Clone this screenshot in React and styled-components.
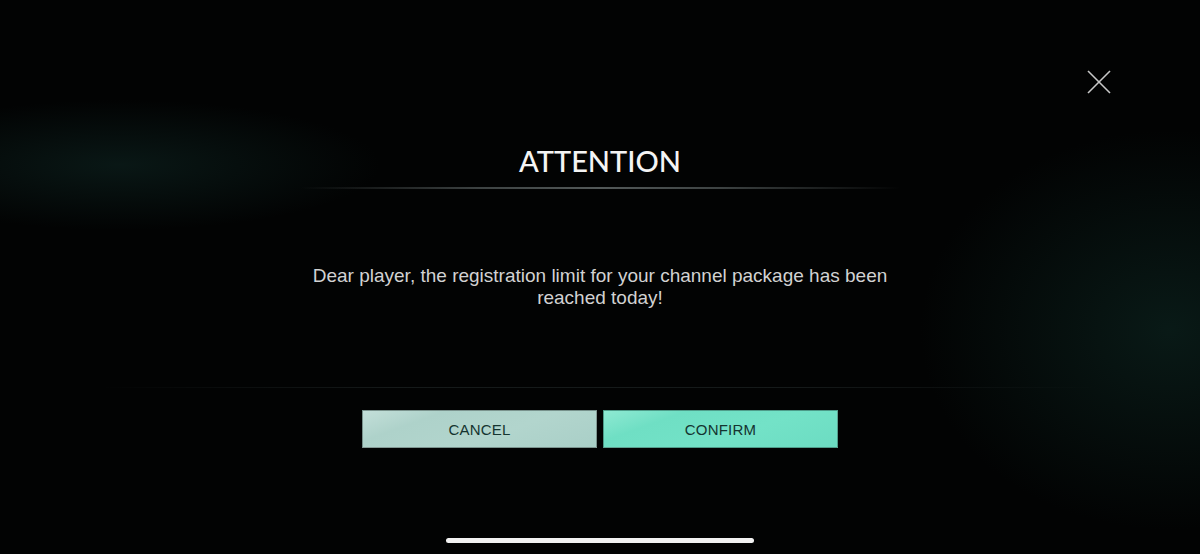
import React from "react";
import styled, { createGlobalStyle } from "styled-components";

const Global = createGlobalStyle`
  html, body { margin: 0; padding: 0; background: #000; }
  body { width: 1200px; height: 554px; overflow: hidden; font-family: "Liberation Sans", Arial, sans-serif; }
`;

const Screen = styled.div`
  position: relative;
  width: 1200px;
  height: 554px;
  background:
    radial-gradient(ellipse 260px 65px at 120px 165px, rgba(18, 48, 44, 0.45), transparent 100%),
    radial-gradient(ellipse 250px 200px at 1170px 330px, rgba(16, 48, 42, 0.5), transparent 100%),
    #020303;
  display: flex;
  flex-direction: column;
  align-items: center;
  overflow: hidden;
`;

const CloseButton = styled.button`
  position: absolute;
  top: 68px;
  left: 1085px;
  width: 28px;
  height: 28px;
  padding: 0;
  border: none;
  background: transparent;
  cursor: pointer;
`;

const Title = styled.h1`
  margin: 144px 0 0;
  font-family: "Lato", "Open Sans", sans-serif;
  font-weight: 500;
  font-size: 29px;
  letter-spacing: 0;
  color: #f4f4f4;
  line-height: 34px;
`;

const Divider = styled.div`
  margin-top: 9px;
  width: 600px;
  height: 2px;
  background: linear-gradient(90deg, transparent, rgba(120, 130, 130, 0.5) 30%, rgba(150, 160, 160, 0.55) 50%, rgba(120, 130, 130, 0.5) 70%, transparent);
`;

const Message = styled.p`
  margin: 76px 0 0;
  width: 600px;
  text-align: center;
  font-size: 19px;
  line-height: 22px;
  color: #d2d2d2;
`;

const PanelEdge = styled.div`
  margin-top: 78px;
  width: 1000px;
  height: 1px;
  background: linear-gradient(90deg, transparent, rgba(40, 48, 48, 0.5) 30%, rgba(40, 48, 48, 0.5) 70%, transparent);
`;

const Buttons = styled.div`
  margin-top: 22px;
  display: flex;
  gap: 6px;
`;

const ActionButton = styled.button`
  width: 235px;
  height: 38px;
  border: 1px solid rgba(0, 0, 0, 0.3);
  padding: 0;
  font-family: "Liberation Sans", Arial, sans-serif;
  font-size: 15px;
  color: #153430;
  letter-spacing: 0.2px;
  background: ${p => p.$primary
    ? "linear-gradient(160deg, #8ee9d2 0%, #6fdfc4 25%, #73e2c7 60%, #6cdcc2 100%)"
    : "linear-gradient(160deg, #c3dfd9 0%, #aed2ca 25%, #b2d5cd 60%, #a9cfc7 100%)"};
  cursor: pointer;
`;

const HomeIndicator = styled.div`
  position: absolute;
  bottom: 11px;
  left: 446px;
  width: 308px;
  height: 5px;
  border-radius: 3px;
  background: #f2f2f2;
`;

export default function App() {
  return (
    <>
      <Global />
      <Screen>
        <CloseButton aria-label="Close">
          <svg width="28" height="28" viewBox="0 0 28 28">
            <line x1="3" y1="3" x2="25" y2="25" stroke="#c8c8c8" strokeWidth="1.6" />
            <line x1="25" y1="3" x2="3" y2="25" stroke="#c8c8c8" strokeWidth="1.6" />
          </svg>
        </CloseButton>
        <Title>ATTENTION</Title>
        <Divider />
        <Message>
          Dear player, the registration limit for your channel package has been reached today!
        </Message>
        <PanelEdge />
        <Buttons>
          <ActionButton>CANCEL</ActionButton>
          <ActionButton $primary>CONFIRM</ActionButton>
        </Buttons>
        <HomeIndicator />
      </Screen>
    </>
  );
}
